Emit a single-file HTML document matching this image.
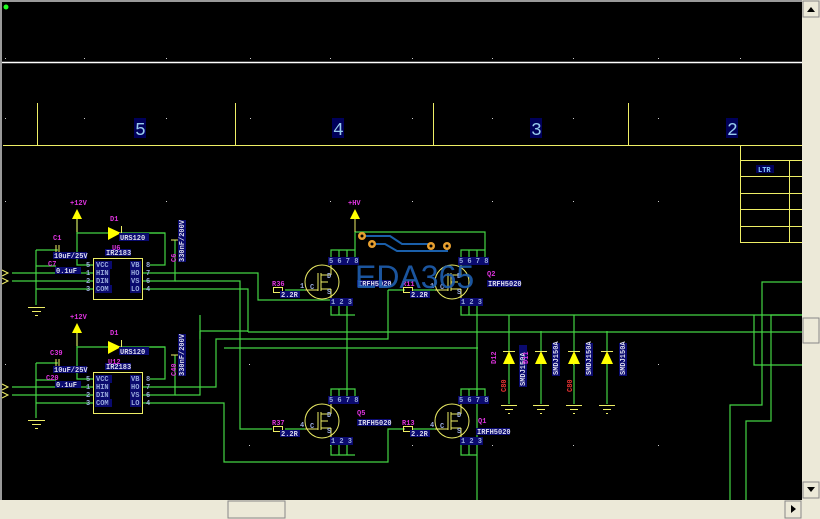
<!DOCTYPE html>
<html><head><meta charset="utf-8"><style>
html,body{margin:0;padding:0;background:#000;width:820px;height:519px;overflow:hidden}
svg{display:block}
text{font-family:"Liberation Mono",monospace;}
</style></head><body>
<svg width="820" height="519" viewBox="0 0 820 519" xmlns="http://www.w3.org/2000/svg">
<rect width="820" height="519" fill="#000"/>
<rect x="0" y="0" width="820" height="2" fill="#9a9a9a"/>
<rect x="0" y="0" width="2" height="519" fill="#9a9a9a"/>
<circle cx="6" cy="7" r="2.5" fill="#2f2"/>
<g fill="#ccc">
<rect x="5" y="58" width="1" height="1"/><rect x="84" y="58" width="1" height="1"/><rect x="166" y="58" width="1" height="1"/><rect x="250" y="58" width="1" height="1"/><rect x="330" y="58" width="1" height="1"/><rect x="412" y="58" width="1" height="1"/><rect x="492" y="58" width="1" height="1"/><rect x="573" y="58" width="1" height="1"/><rect x="658" y="58" width="1" height="1"/><rect x="740" y="58" width="1" height="1"/>
<rect x="5" y="118" width="1" height="1"/><rect x="84" y="118" width="1" height="1"/><rect x="166" y="118" width="1" height="1"/><rect x="250" y="118" width="1" height="1"/><rect x="412" y="118" width="1" height="1"/><rect x="492" y="118" width="1" height="1"/><rect x="573" y="118" width="1" height="1"/><rect x="658" y="118" width="1" height="1"/>
<rect x="5" y="201" width="1" height="1"/><rect x="166" y="201" width="1" height="1"/><rect x="330" y="201" width="1" height="1"/><rect x="412" y="201" width="1" height="1"/><rect x="492" y="201" width="1" height="1"/><rect x="573" y="201" width="1" height="1"/><rect x="658" y="201" width="1" height="1"/>
<rect x="5" y="364" width="1" height="1"/><rect x="249" y="364" width="1" height="1"/><rect x="573" y="364" width="1" height="1"/><rect x="658" y="364" width="1" height="1"/>
<rect x="249" y="445" width="1" height="1"/><rect x="330" y="445" width="1" height="1"/><rect x="412" y="445" width="1" height="1"/><rect x="492" y="445" width="1" height="1"/><rect x="573" y="445" width="1" height="1"/><rect x="658" y="445" width="1" height="1"/>
</g>
<line x1="2" y1="62.5" x2="802" y2="62.5" stroke="#fff" stroke-width="1.5"/>
<g stroke="#ee6" stroke-width="1" fill="none">
<line x1="3" y1="145.5" x2="802" y2="145.5"/>
<line x1="37.5" y1="103" x2="37.5" y2="145"/>
<line x1="235.5" y1="103" x2="235.5" y2="145"/>
<line x1="433.5" y1="103" x2="433.5" y2="145"/>
<line x1="628.5" y1="103" x2="628.5" y2="145"/>
<line x1="740.5" y1="145" x2="740.5" y2="243"/>
<line x1="740" y1="160.5" x2="802" y2="160.5"/>
<line x1="740" y1="176.5" x2="802" y2="176.5"/>
<line x1="740" y1="193.5" x2="802" y2="193.5"/>
<line x1="740" y1="209.5" x2="802" y2="209.5"/>
<line x1="740" y1="226.5" x2="802" y2="226.5"/>
<line x1="740" y1="242.5" x2="802" y2="242.5"/>
<line x1="789.5" y1="160" x2="789.5" y2="243"/>
</g>
<g fill="#00005a"><rect x="134" y="118" width="12" height="20"/><rect x="332" y="118" width="12" height="20"/><rect x="530" y="118" width="12" height="20"/><rect x="726" y="118" width="12" height="20"/><rect x="756" y="165" width="18" height="8"/></g>
<g fill="#9ce" font-size="18" font-family="Liberation Sans,sans-serif" style="font-family:'Liberation Sans',sans-serif"><text x="135" y="135">5</text><text x="333" y="135">4</text><text x="531" y="135">3</text><text x="727" y="135">2</text></g>
<text x="758" y="172" fill="#8cf" font-size="7" font-weight="bold">LTR</text>

<g stroke="#44d444" stroke-width="1.2" fill="none">
<polyline points="77,218 77,233 165,233"/>
<polyline points="150,233 165,233 165,265 150,265"/>
<polyline points="77,233 77,265 93,265"/>
<polyline points="36,250 36,305"/>
<polyline points="36,250 58,250"/>
<polyline points="36,266 56,266"/>
<line x1="12" y1="273" x2="93" y2="273"/><line x1="12" y1="281" x2="93" y2="281"/>
<line x1="36" y1="289" x2="93" y2="289"/>
<polyline points="142,273 258,273 258,300 330,300"/>
<polyline points="142,281 175,281 175,240"/>
<polyline points="175,281 230,281 240,281 240,429 272,429"/>
<polyline points="142,289 248,289 248,332"/>
<polyline points="77,332 77,347 165,347"/>
<polyline points="150,347 165,347 165,379 150,379"/>
<polyline points="77,347 77,379 93,379"/>
<polyline points="36,363 36,418"/>
<polyline points="36,363 58,363"/>
<polyline points="36,380 56,380"/>
<line x1="12" y1="387" x2="93" y2="387"/><line x1="12" y1="395" x2="93" y2="395"/>
<line x1="36" y1="403" x2="93" y2="403"/>
<polyline points="142,387 216,387 216,339 388,339 388,290"/>
<polyline points="142,395 175,395 175,355"/>
<polyline points="142,403 224,403 224,462 388,462 388,429 405,429"/>
<polyline points="175,395 200,395 200,315"/>
<polyline points="200,331 248,331"/>
<polyline points="224,348 478,348"/>
<polyline points="248,332 802,332"/>
<polyline points="388,290 405,290"/>
<line x1="285" y1="290" x2="305" y2="290"/>
<line x1="285" y1="429" x2="305" y2="429"/>
<line x1="413" y1="290" x2="440" y2="290"/>
<line x1="413" y1="429" x2="440" y2="429"/>
<polyline points="331,262 331,250 355,250 355,262"/><line x1="339" y1="250" x2="339" y2="262"/><line x1="347" y1="250" x2="347" y2="262"/>
<polyline points="331,304 331,315 355,315"/><line x1="339" y1="304" x2="339" y2="315"/><line x1="347" y1="304" x2="347" y2="400"/>
<polyline points="461,262 461,250 485,250 485,262"/><line x1="469" y1="250" x2="469" y2="262"/><line x1="477" y1="250" x2="477" y2="262"/>
<polyline points="461,304 461,315 802,315"/><line x1="469" y1="304" x2="469" y2="315"/><line x1="477" y1="304" x2="477" y2="500"/>
<polyline points="331,400 331,389 355,389 355,400"/><line x1="339" y1="389" x2="339" y2="400"/>
<polyline points="331,443 331,455 355,455"/><line x1="339" y1="443" x2="339" y2="455"/><line x1="347" y1="443" x2="347" y2="455"/>
<polyline points="461,400 461,389 485,389 485,400"/><line x1="469" y1="389" x2="469" y2="400"/><line x1="477" y1="389" x2="477" y2="400"/>
<polyline points="461,443 461,455 477,455"/><line x1="469" y1="443" x2="469" y2="455"/>
<polyline points="355,250 355,232 485,232 485,250"/>
<polyline points="200,331 200,339"/>
<line x1="509" y1="315" x2="509" y2="352"/><line x1="541" y1="331" x2="541" y2="352"/><line x1="574" y1="315" x2="574" y2="352"/><line x1="607" y1="331" x2="607" y2="352"/>
<line x1="509" y1="364" x2="509" y2="404"/><line x1="541" y1="364" x2="541" y2="404"/><line x1="574" y1="364" x2="574" y2="404"/><line x1="607" y1="364" x2="607" y2="404"/>
<polyline points="754,315 754,365 802,365"/>
<polyline points="802,282 762,282 762,405 730,405 730,500"/>
<polyline points="802,315 771,315 771,421 746,421 746,500"/>
</g>
<g stroke="#ee6" fill="none" stroke-width="1">
<polyline points="2,270 8,273 2,276"/><polyline points="2,278 8,281 2,284"/>
<polyline points="2,384 8,387 2,390"/><polyline points="2,392 8,395 2,398"/>
<rect x="93.5" y="258.5" width="49" height="41"/>
<rect x="93.5" y="372.5" width="49" height="41"/>
<line x1="28" y1="307.5" x2="45" y2="307.5"/><line x1="32" y1="311.5" x2="41" y2="311.5"/><line x1="35" y1="315.5" x2="38" y2="315.5"/>
<line x1="28" y1="420.5" x2="45" y2="420.5"/><line x1="32" y1="424.5" x2="41" y2="424.5"/><line x1="35" y1="428.5" x2="38" y2="428.5"/>
<g id="gd"><line x1="501" y1="405.5" x2="517" y2="405.5"/><line x1="505" y1="409.5" x2="513" y2="409.5"/><line x1="508" y1="413.5" x2="510" y2="413.5"/></g>
<use href="#gd" x="32"/><use href="#gd" x="65"/><use href="#gd" x="98"/>
<circle cx="322" cy="282" r="17"/><circle cx="452" cy="282" r="17"/>
<circle cx="322" cy="421" r="17"/><circle cx="452" cy="421" r="17"/>
<g id="mf"><line x1="318" y1="273" x2="318" y2="291"/><line x1="321" y1="273" x2="321" y2="291"/><line x1="321" y1="275" x2="331" y2="275"/><line x1="321" y1="289" x2="331" y2="289"/><line x1="321" y1="282" x2="328" y2="282"/><line x1="331" y1="262" x2="331" y2="275"/><line x1="331" y1="289" x2="331" y2="304"/><line x1="305" y1="290" x2="318" y2="290"/></g>
<use href="#mf" x="130"/><use href="#mf" y="139"/><use href="#mf" x="130" y="139"/>
<rect x="273.5" y="287.5" width="9" height="5"/><rect x="403.5" y="287.5" width="9" height="5"/>
<rect x="273.5" y="426.5" width="9" height="5"/><rect x="403.5" y="426.5" width="9" height="5"/>
<line x1="56" y1="245" x2="56" y2="255"/><line x1="59" y1="245" x2="59" y2="255"/>
<line x1="56" y1="359" x2="56" y2="369"/><line x1="59" y1="359" x2="59" y2="369"/>
<line x1="171" y1="240" x2="179" y2="240"/><line x1="171" y1="355" x2="179" y2="355"/>
<line x1="77" y1="218" x2="77" y2="232"/><line x1="77" y1="332" x2="77" y2="346"/><line x1="355" y1="218" x2="355" y2="232"/>
<line x1="121.5" y1="226" x2="121.5" y2="240"/><line x1="121.5" y1="340" x2="121.5" y2="354"/>
</g>
<g fill="#ff0">
<polygon points="77,209 72,219 82,219"/><polygon points="77,323 72,333 82,333"/><polygon points="355,209 350,219 360,219"/>
<polygon points="108,227 121,233 108,240"/><polygon points="108,341 121,347 108,354"/>
<polygon points="509,351 503,364 515,364"/><polygon points="541,351 535,364 547,364"/><polygon points="574,351 568,364 580,364"/><polygon points="607,351 601,364 613,364"/>
</g>
<g stroke="#ee6"><line x1="503" y1="351.5" x2="515" y2="351.5"/><line x1="535" y1="351.5" x2="547" y2="351.5"/><line x1="568" y1="351.5" x2="580" y2="351.5"/><line x1="601" y1="351.5" x2="613" y2="351.5"/></g>

<g fill="#0a0a6e">
<rect x="95" y="261" width="17" height="8"/><rect x="95" y="269" width="15" height="8"/><rect x="95" y="277" width="15" height="8"/><rect x="95" y="285" width="17" height="8"/>
<rect x="130" y="261" width="11" height="8"/><rect x="130" y="269" width="11" height="8"/><rect x="130" y="277" width="11" height="8"/><rect x="130" y="285" width="11" height="8"/>
<rect x="95" y="375" width="17" height="8"/><rect x="95" y="383" width="15" height="8"/><rect x="95" y="391" width="15" height="8"/><rect x="95" y="399" width="17" height="8"/>
<rect x="130" y="375" width="11" height="8"/><rect x="130" y="383" width="11" height="8"/><rect x="130" y="391" width="11" height="8"/><rect x="130" y="399" width="11" height="8"/>
<rect x="119" y="233" width="30" height="8"/><rect x="119" y="347" width="30" height="8"/>
<rect x="105" y="249" width="26" height="7"/><rect x="105" y="363" width="26" height="7"/>
<rect x="53" y="252" width="34" height="7"/><rect x="53" y="366" width="34" height="7"/>
<rect x="55" y="267" width="26" height="7"/><rect x="55" y="381" width="26" height="7"/>
<rect x="328" y="257" width="31" height="8"/><rect x="458" y="257" width="31" height="8"/><rect x="328" y="396" width="31" height="8"/><rect x="458" y="396" width="31" height="8"/>
<rect x="330" y="298" width="23" height="8"/><rect x="460" y="298" width="23" height="8"/><rect x="330" y="437" width="23" height="8"/><rect x="460" y="437" width="23" height="8"/>
<rect x="280" y="291" width="20" height="7"/><rect x="410" y="291" width="20" height="7"/><rect x="280" y="430" width="20" height="7"/><rect x="410" y="430" width="20" height="7"/>
<rect x="357" y="280" width="34" height="7"/><rect x="487" y="280" width="34" height="7"/><rect x="357" y="419" width="34" height="7"/><rect x="476" y="428" width="34" height="7"/>
<rect x="178" y="220" width="8" height="42"/><rect x="178" y="334" width="8" height="42"/>
<rect x="519" y="345" width="8" height="42"/><rect x="552" y="343" width="8" height="33"/><rect x="585" y="343" width="8" height="33"/><rect x="619" y="343" width="8" height="33"/>
</g>
<g font-size="7" font-weight="bold" fill="#9ad">
<text x="96" y="267">VCC</text><text x="96" y="275">HIN</text><text x="96" y="283">DIN</text><text x="96" y="291">COM</text>
<text x="131" y="267">VB</text><text x="131" y="275">HO</text><text x="131" y="283">VS</text><text x="131" y="291">LO</text>
<text x="96" y="381">VCC</text><text x="96" y="389">HIN</text><text x="96" y="397">DIN</text><text x="96" y="405">COM</text>
<text x="131" y="381">VB</text><text x="131" y="389">HO</text><text x="131" y="397">VS</text><text x="131" y="405">LO</text>
<text x="86" y="267">5</text><text x="86" y="275">1</text><text x="86" y="283">2</text><text x="86" y="291">3</text>
<text x="146" y="267">8</text><text x="146" y="275">7</text><text x="146" y="283">6</text><text x="146" y="291">4</text>
<text x="86" y="381">5</text><text x="86" y="389">1</text><text x="86" y="397">2</text><text x="86" y="405">3</text>
<text x="146" y="381">8</text><text x="146" y="389">7</text><text x="146" y="397">6</text><text x="146" y="405">4</text>
<text x="329" y="263">5 6 7 8</text><text x="459" y="263">5 6 7 8</text><text x="329" y="402">5 6 7 8</text><text x="459" y="402">5 6 7 8</text>
<text x="331" y="304">1 2 3</text><text x="461" y="304">1 2 3</text><text x="331" y="443">1 2 3</text><text x="461" y="443">1 2 3</text>
<text x="300" y="288">1</text><text x="430" y="288">1</text><text x="300" y="427">4</text><text x="430" y="427">4</text>
<text x="310" y="289">C</text><text x="440" y="289">C</text><text x="310" y="428">C</text><text x="440" y="428">C</text>
<text x="327" y="278">D</text><text x="457" y="278">D</text><text x="327" y="417">D</text><text x="457" y="417">D</text>
<text x="327" y="294">S</text><text x="457" y="294">S</text><text x="327" y="433">S</text><text x="457" y="433">S</text>
</g>
<g font-size="7" font-weight="bold" fill="#dde">
<text x="120" y="240">URS120</text><text x="120" y="354">URS120</text>
<text x="106" y="255">IR2183</text><text x="106" y="369">IR2183</text>
<text x="54" y="258">10uF/25V</text><text x="54" y="372">10uF/25V</text>
<text x="56" y="273">0.1uF</text><text x="56" y="387">0.1uF</text>
<text x="281" y="297">2.2R</text><text x="411" y="297">2.2R</text><text x="281" y="436">2.2R</text><text x="411" y="436">2.2R</text>
<text x="358" y="286">IRFH5020</text><text x="488" y="286">IRFH5020</text><text x="358" y="425">IRFH5020</text><text x="477" y="434">IRFH5020</text>
<text transform="translate(184,262) rotate(-90)">330nF/200V</text>
<text transform="translate(184,376) rotate(-90)">330nF/200V</text>
<text transform="translate(525,386) rotate(-90)">SMDJ150A</text>
<text transform="translate(558,375) rotate(-90)">SMDJ150A</text>
<text transform="translate(591,375) rotate(-90)">SMDJ150A</text>
<text transform="translate(625,375) rotate(-90)">SMDJ150A</text>
</g>
<g font-size="7" font-weight="bold" fill="#d3d">
<text x="70" y="205">+12V</text><text x="70" y="319">+12V</text><text x="348" y="205">+HV</text>
<text x="110" y="221">D1</text><text x="110" y="335">D1</text>
<text x="53" y="240">C1</text><text x="50" y="355">C39</text><text x="48" y="266">C7</text><text x="46" y="380">C20</text>
<text x="112" y="250">U6</text><text x="108" y="364">U12</text>
<text x="272" y="286">R36</text><text x="402" y="286">R11</text><text x="272" y="425">R37</text><text x="402" y="425">R13</text>
<text x="487" y="276">Q2</text><text x="357" y="415">Q5</text><text x="478" y="423">Q1</text>
<text transform="translate(496,364) rotate(-90)">D12</text>
<text transform="translate(528,364) rotate(-90)">D11</text>
<text transform="translate(176,262) rotate(-90)">C6</text>
<text transform="translate(176,376) rotate(-90)">C40</text>
<text transform="translate(506,392) rotate(-90)" fill="#e33">C80</text>
<text transform="translate(572,392) rotate(-90)" fill="#e33">C80</text>
</g>
<g stroke="#1a5faa" stroke-width="2" fill="none">
<polyline points="362,236 390,236 402,244 431,244"/><polyline points="372,244 385,244 397,251 447,251 447,246"/>
</g>
<g fill="#e8a030"><circle cx="362" cy="236" r="4"/><circle cx="372" cy="244" r="4"/><circle cx="431" cy="246" r="4"/><circle cx="447" cy="246" r="4"/></g>
<g fill="#000"><circle cx="362" cy="236" r="1.5"/><circle cx="372" cy="244" r="1.5"/><circle cx="431" cy="246" r="1.5"/><circle cx="447" cy="246" r="1.5"/></g>
<text x="355" y="288" font-size="32" fill="#1f5fb0" opacity="0.9" style="font-family:'Liberation Sans',sans-serif">EDA365</text>

<rect x="802" y="0" width="18" height="519" fill="#ece9d8"/>
<rect x="0" y="500" width="820" height="19" fill="#ece9d8"/>
<rect x="803" y="1" width="16" height="16" fill="#ece9d8" stroke="#888"/>
<polygon points="807,12 815,12 811,7" fill="#000"/>
<rect x="803" y="482" width="16" height="16" fill="#ece9d8" stroke="#888"/>
<polygon points="807,487 815,487 811,492" fill="#000"/>
<rect x="803" y="318" width="16" height="25" fill="#ece9d8" stroke="#888"/>
<rect x="228" y="501" width="57" height="17" fill="#ece9d8" stroke="#888"/>
<rect x="785" y="501" width="16" height="17" fill="#ece9d8" stroke="#888"/>
<polygon points="791,505 791,513 796,509" fill="#000"/>
</svg>
</body></html>
